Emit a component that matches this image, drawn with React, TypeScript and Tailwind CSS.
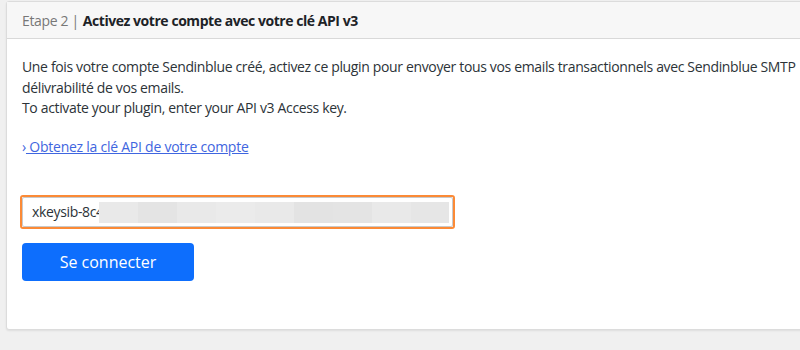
import React from "react";

export default function App() {
  const blocks = [
    { w: 39, c: "#e9e9e9" },
    { w: 39, c: "#e4e4e4" },
    { w: 39, c: "#e9e9e9" },
    { w: 39, c: "#ebebeb" },
    { w: 39, c: "#e9e9e9" },
    { w: 39, c: "#e3e3e3" },
    { w: 39, c: "#e4e4e4" },
    { w: 39, c: "#e9e9e9" },
    { w: 38, c: "#e6e6e6" },
  ];
  return (
    <div
      className="w-[800px] h-[350px] overflow-hidden bg-[#f0f0f0] pl-[6px] pt-px tracking-[-0.35px]"
      style={{ fontFamily: '"Open Sans", "Noto Sans", sans-serif' }}
    >
      <div className="w-[1100px] h-[329px] bg-white border border-[#dcdcdc] rounded-[3px] shadow-[0_1px_2px_rgba(0,0,0,0.08)] flex flex-col">
        <div className="h-[37px] bg-[#f7f7f7] border-b border-[#d9d9d9] flex items-center pl-[15px] text-[14px]">
          <span className="text-[#777]">Etape 2 |</span>
          <span className="ml-[4px] font-bold text-[#1d2327] tracking-[-0.45px]">Activez votre compte avec votre clé API v3</span>
        </div>
        <div className="pl-[15px] pt-[18px] text-[14px] leading-[20.5px] text-[#2c3338]">
          <div className="whitespace-nowrap">
            Une fois votre compte Sendinblue créé, activez ce plugin pour envoyer tous vos emails transactionnels avec Sendinblue SMTP
          </div>
          <div>délivrabilité de vos emails.</div>
          <div>To activate your plugin, enter your API v3 Access key.</div>
          <div className="mt-[18px] text-[#3f66e0] tracking-[-0.25px]">
            <span>›</span>
            <span className="underline"> Obtenez la clé API de votre compte</span>
          </div>
          <div className="mt-[38px] -ml-[2px] w-[435px] h-[34px] border-2 border-[#fb8a36] rounded-[3px]">
            <div className="h-full border border-[#c9c9c9] rounded-[2px] bg-white flex items-center pl-[9px] text-[14px] text-[#2c3338] whitespace-nowrap">
              <span className="shrink-0">xkeysib-8c4</span>
              <div className="flex h-[21px] -ml-[5px] shrink-0">
                {blocks.map((b, i) => (
                  <div key={i} className="h-full" style={{ width: b.w, background: b.c }} />
                ))}
              </div>
            </div>
          </div>
          <button className="mt-[14px] w-[172px] h-[38px] bg-[#0d6efd] rounded-[4px] text-white text-[16px] tracking-normal flex items-center justify-center">
            Se connecter
          </button>
        </div>
      </div>
    </div>
  );
}
